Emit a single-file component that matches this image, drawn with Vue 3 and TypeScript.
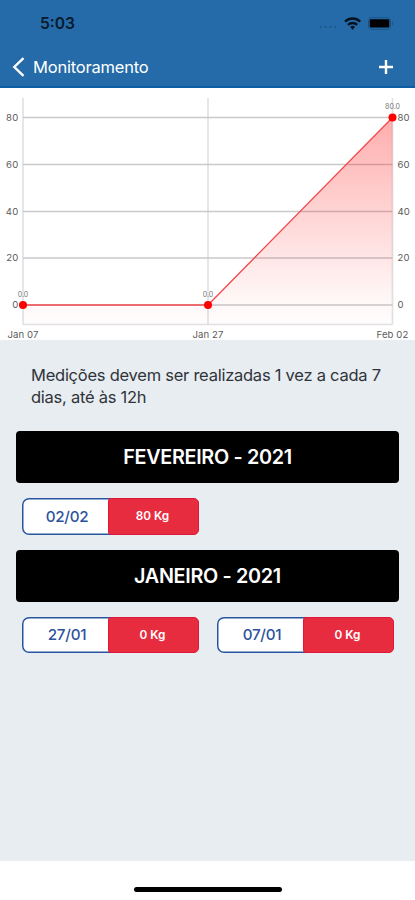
<script setup lang="ts">
interface Point { x: number; y: number; value: string; date: string }
interface Entry { date: string; weight: string }
interface Month { title: string; entries: Entry[] }

const points: Point[] = [
  { x: 23, y: 217, value: '0.0', date: 'Jan 07' },
  { x: 208, y: 217, value: '0.0', date: 'Jan 27' },
  { x: 392.5, y: 29.5, value: '80.0', date: 'Feb 02' },
]
const ticks = [
  { label: '80', y: 29.5 },
  { label: '60', y: 76.5 },
  { label: '40', y: 123.5 },
  { label: '20', y: 170 },
  { label: '0', y: 217 },
]
const line = points.map((p) => `${p.x},${p.y}`).join(' ')
const area = `23,237 ${line} 392.5,237`

const months: Month[] = [
  { title: 'FEVEREIRO - 2021', entries: [{ date: '02/02', weight: '80 Kg' }] },
  {
    title: 'JANEIRO - 2021',
    entries: [
      { date: '27/01', weight: '0 Kg' },
      { date: '07/01', weight: '0 Kg' },
    ],
  },
]
</script>

<template>
  <div class="screen">
    <header class="header">
      <div class="status">
        <span class="clock">5:03</span>
        <svg class="indicators" width="78" height="20" viewBox="0 0 78 20">
          <g fill="#1c5589">
            <circle v-for="i in 4" :key="i" :cx="-2 + i * 4.8" cy="14" r="1.1" />
          </g>
          <g fill="none" stroke="#06121f" stroke-width="2.4">
            <path d="M27 8.6a11 11 0 0 1 15.2 0" />
            <path d="M30 11.9a6.6 6.6 0 0 1 9.2 0" />
          </g>
          <path d="M32.2 14a3.5 3.5 0 0 1 4.8 0L34.6 16.7z" fill="#06121f" />
          <rect x="50.5" y="4.7" width="22" height="11.6" rx="3" fill="none" stroke="#1b5488" />
          <rect x="51.7" y="6.2" width="19.6" height="8.4" rx="1.3" fill="#000" />
          <path d="M74.2 8.5q2 2 0 4z" fill="#174f82" />
        </svg>
      </div>
      <nav class="nav">
        <svg class="back" width="13" height="20" viewBox="0 0 13 20">
          <path d="M11.5 1.2 2.3 10l9.2 8.8" />
        </svg>
        <span class="title">Monitoramento</span>
        <svg class="add" width="16" height="16" viewBox="0 0 16 16">
          <path d="M8 1v14M1 8h14" />
        </svg>
      </nav>
    </header>

    <svg class="chart" width="415" height="252" viewBox="0 0 415 252">
      <defs>
        <linearGradient id="fill" x1="0" y1="0" x2="0" y2="1">
          <stop offset="0" stop-color="#ff0000" stop-opacity="0.32" />
          <stop offset="0.9" stop-color="#ff0000" stop-opacity="0.025" />
          <stop offset="1" stop-color="#ff0000" stop-opacity="0.01" />
        </linearGradient>
      </defs>
      <g class="grid-v">
        <path v-for="p in points" :key="p.date" :d="`M${p.x} 10V236.5`" />
        <path d="M23 236.5H392.5" />
      </g>
      <path v-for="t in ticks" :key="t.y" class="grid-h" :d="`M23 ${t.y}H392.5`" />
      <polygon :points="area" fill="url(#fill)" />
      <polyline class="series" :points="line" />
      <circle v-for="p in points" :key="p.x" :cx="p.x" :cy="p.y" r="4" fill="#f00" />
      <g class="axis">
        <template v-for="t in ticks" :key="t.label">
          <text x="18.3" :y="t.y + 3" text-anchor="end">{{ t.label }}</text>
          <text x="397.5" :y="t.y + 3">{{ t.label }}</text>
        </template>
        <text v-for="p in points" :key="p.date" :x="p.x" y="249.7" text-anchor="middle">{{ p.date }}</text>
      </g>
      <g class="values">
        <text v-for="p in points" :key="p.x" :x="p.x" :y="p.y - 8.5" text-anchor="middle">{{ p.value }}</text>
      </g>
    </svg>

    <main class="content">
      <p class="note">Medições devem ser realizadas 1 vez a cada 7<br />dias, até às 12h</p>
      <section v-for="m in months" :key="m.title" class="month">
        <h2 class="month-title">{{ m.title }}</h2>
        <div class="entries">
          <div v-for="e in m.entries" :key="e.date" class="entry">
            <span class="date">{{ e.date }}</span>
            <span class="weight">{{ e.weight }}</span>
          </div>
        </div>
      </section>
    </main>

    <footer class="footer"><span class="home"></span></footer>
  </div>
</template>

<style>
body {
  background: #fff;
}
</style>

<style scoped>
.screen {
  display: flex;
  flex-direction: column;
  width: 415px;
  height: 900px;
  overflow: hidden;
  background: #fff;
  font-family: Inter, 'Liberation Sans', sans-serif;
}
.header {
  box-sizing: border-box;
  height: 88px;
  flex: none;
  background: #256ba9;
  border-bottom: 2px solid #0c5ea3;
}
.status {
  display: flex;
  align-items: center;
  justify-content: space-between;
  height: 46px;
  padding: 0 15px 0 40px;
}
.clock {
  padding-top: 1px;
  font-size: 15.6px;
  font-weight: 600;
  line-height: 20px;
  color: #071a2c;
}
.indicators {
  margin-right: 4px;
}
.nav {
  display: flex;
  align-items: center;
  height: 42px;
  padding: 0 21px 0 12px;
}
.back,
.add {
  fill: none;
  stroke: #fff;
  stroke-width: 2.4;
}
.title {
  flex: 1;
  margin-left: 8px;
  color: #fff;
  font-size: 16.5px;
  letter-spacing: -0.2px;
  line-height: 20px;
}
.chart {
  display: block;
  flex: none;
}
.grid-v {
  fill: none;
  stroke: #e2e2e4;
  stroke-width: 1.7;
}
.grid-h {
  stroke: #c9c9cb;
  stroke-width: 1.3;
}
.series {
  fill: none;
  stroke: #f34b4f;
  stroke-width: 1.3;
}
.axis {
  fill: #5c5c5c;
  font-size: 9.6px;
  letter-spacing: 0.1px;
}
.values {
  fill: #777;
  font-size: 7px;
}
.content {
  flex: none;
  box-sizing: border-box;
  height: 521px;
  padding: 24px 16px 0;
  background: #e7edf1;
}
.note {
  margin: 0 0 23px;
  padding-left: 15px;
  color: #30343a;
  font-size: 16.5px;
  letter-spacing: -0.25px;
  line-height: 22px;
  white-space: nowrap;
}
.month-title {
  box-sizing: border-box;
  height: 52px;
  margin: 0;
  border-radius: 4px;
  background: #000;
  color: #fff;
  font-size: 19.8px;
  font-weight: 600;
  letter-spacing: -0.32px;
  line-height: 52px;
  text-align: center;
}
.entries {
  display: flex;
  gap: 18px;
  padding: 15px 5px 15px 6px;
}
.entry {
  display: flex;
  width: 177px;
  height: 36.5px;
}
.date,
.weight {
  box-sizing: border-box;
  display: flex;
  align-items: center;
  justify-content: center;
}
.date {
  width: 92px;
  padding-right: 2px;
  border-radius: 7px 0 0 7px;
  background: #fff;
  box-shadow: inset 0 0 0 1.5px #2855a0;
  color: #2c529c;
  font-size: 15.2px;
  font-weight: 500;
  letter-spacing: -0.25px;
}
.weight {
  width: 91px;
  margin-left: -6px;
  padding-right: 2px;
  border: 1px solid #e01838;
  border-radius: 3px 5px 5px 3px;
  background: #e82c40;
  color: #fff;
  font-size: 11.8px;
  font-weight: 600;
}
.footer {
  display: flex;
  flex: 1;
  justify-content: center;
}
.home {
  width: 148px;
  height: 5px;
  margin-top: 26px;
  border-radius: 3px;
  background: #000;
}
</style>
